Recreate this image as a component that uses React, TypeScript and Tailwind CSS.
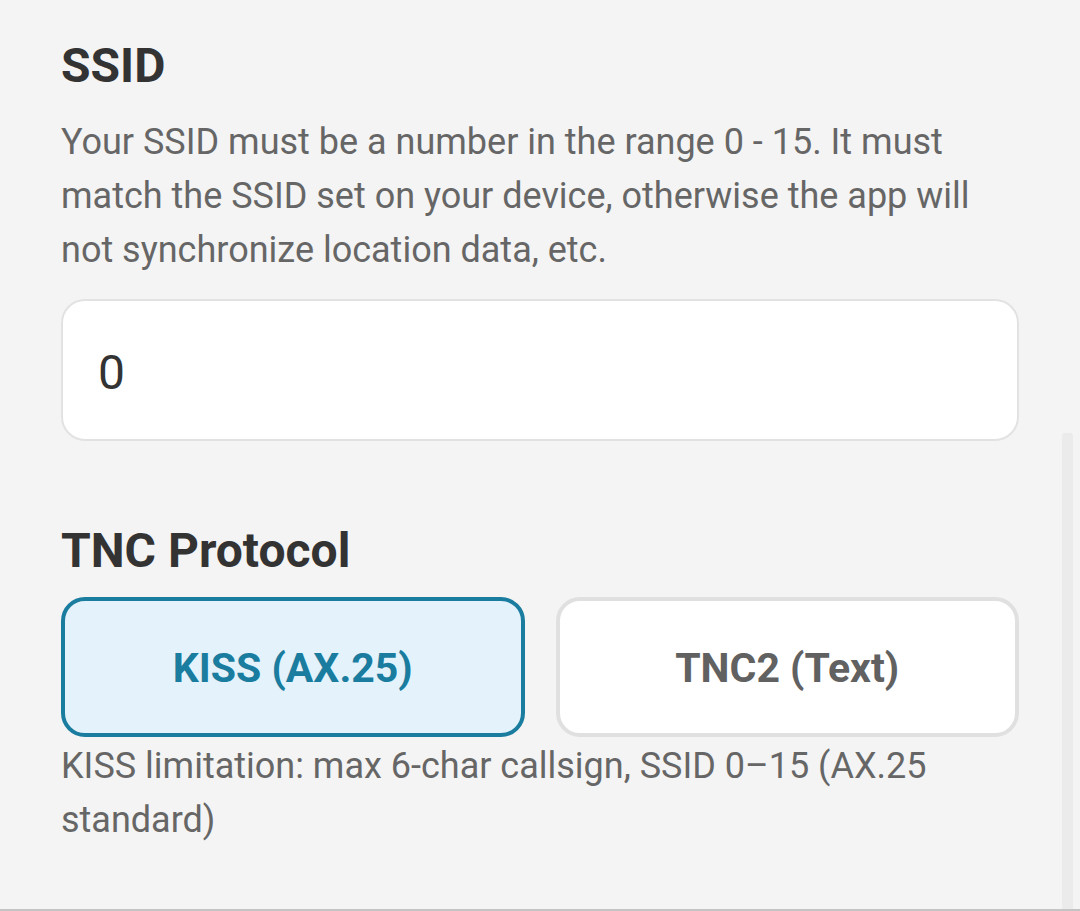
import { useState } from "react";

type Protocol = "kiss" | "tnc2";

const protocols: { id: Protocol; label: string }[] = [
  { id: "kiss", label: "KISS (AX.25)" },
  { id: "tnc2", label: "TNC2 (Text)" },
];

export default function App() {
  const [ssid, setSsid] = useState("0");
  const [protocol, setProtocol] = useState<Protocol>("kiss");

  return (
    <div className="relative h-[911px] w-full overflow-hidden bg-[#f4f4f4] font-['Roboto',sans-serif]">
      <div className="px-[61px] pt-[38px]">
        <h2 className="text-[48px] leading-[56px] font-bold text-[#333333]">SSID</h2>
        <p className="mt-[21px] text-[36px] leading-[54px] text-[#666666]">
          Your SSID must be a number in the range 0 - 15. It must match the SSID set on your
          device, otherwise the app will not synchronize location data, etc.
        </p>

        <input
          value={ssid}
          onChange={(e) => setSsid(e.target.value)}
          inputMode="numeric"
          className="mt-[22px] block h-[142px] w-full rounded-[24px] border-2 border-[#e2e2e2] bg-white pl-[35px] pt-[4px] text-[48px] text-[#333333] outline-none"
        />

        <h2 className="mt-[82px] text-[48px] leading-[56px] font-bold text-[#333333]">
          TNC Protocol
        </h2>

        <div className="mt-[18px] grid grid-cols-2 gap-[31px]">
          {protocols.map((p) => {
            const active = p.id === protocol;
            return (
              <button
                key={p.id}
                onClick={() => setProtocol(p.id)}
                className={`h-[140px] rounded-[24px] border-4 pt-[4px] text-[41px] font-bold ${
                  active
                    ? "border-[#1a7c9e] bg-[#e3f2fb] text-[#1a7c9e]"
                    : "border-[#e0e0e0] bg-white text-[#616161]"
                }`}
              >
                {p.label}
              </button>
            );
          })}
        </div>

        <p className="mt-[2px] text-[36px] leading-[54px] text-[#666666]">
          KISS limitation: max 6-char callsign, SSID 0–15 (AX.25 standard)
        </p>
      </div>

      {/* scroll track */}
      <div className="absolute right-[7px] top-[433px] bottom-0 w-[11px] rounded-t-[3px] bg-[#ebebeb]" />
      <div className="absolute inset-x-0 bottom-0 h-[2px] bg-[#c4c4c4]" />
    </div>
  );
}
